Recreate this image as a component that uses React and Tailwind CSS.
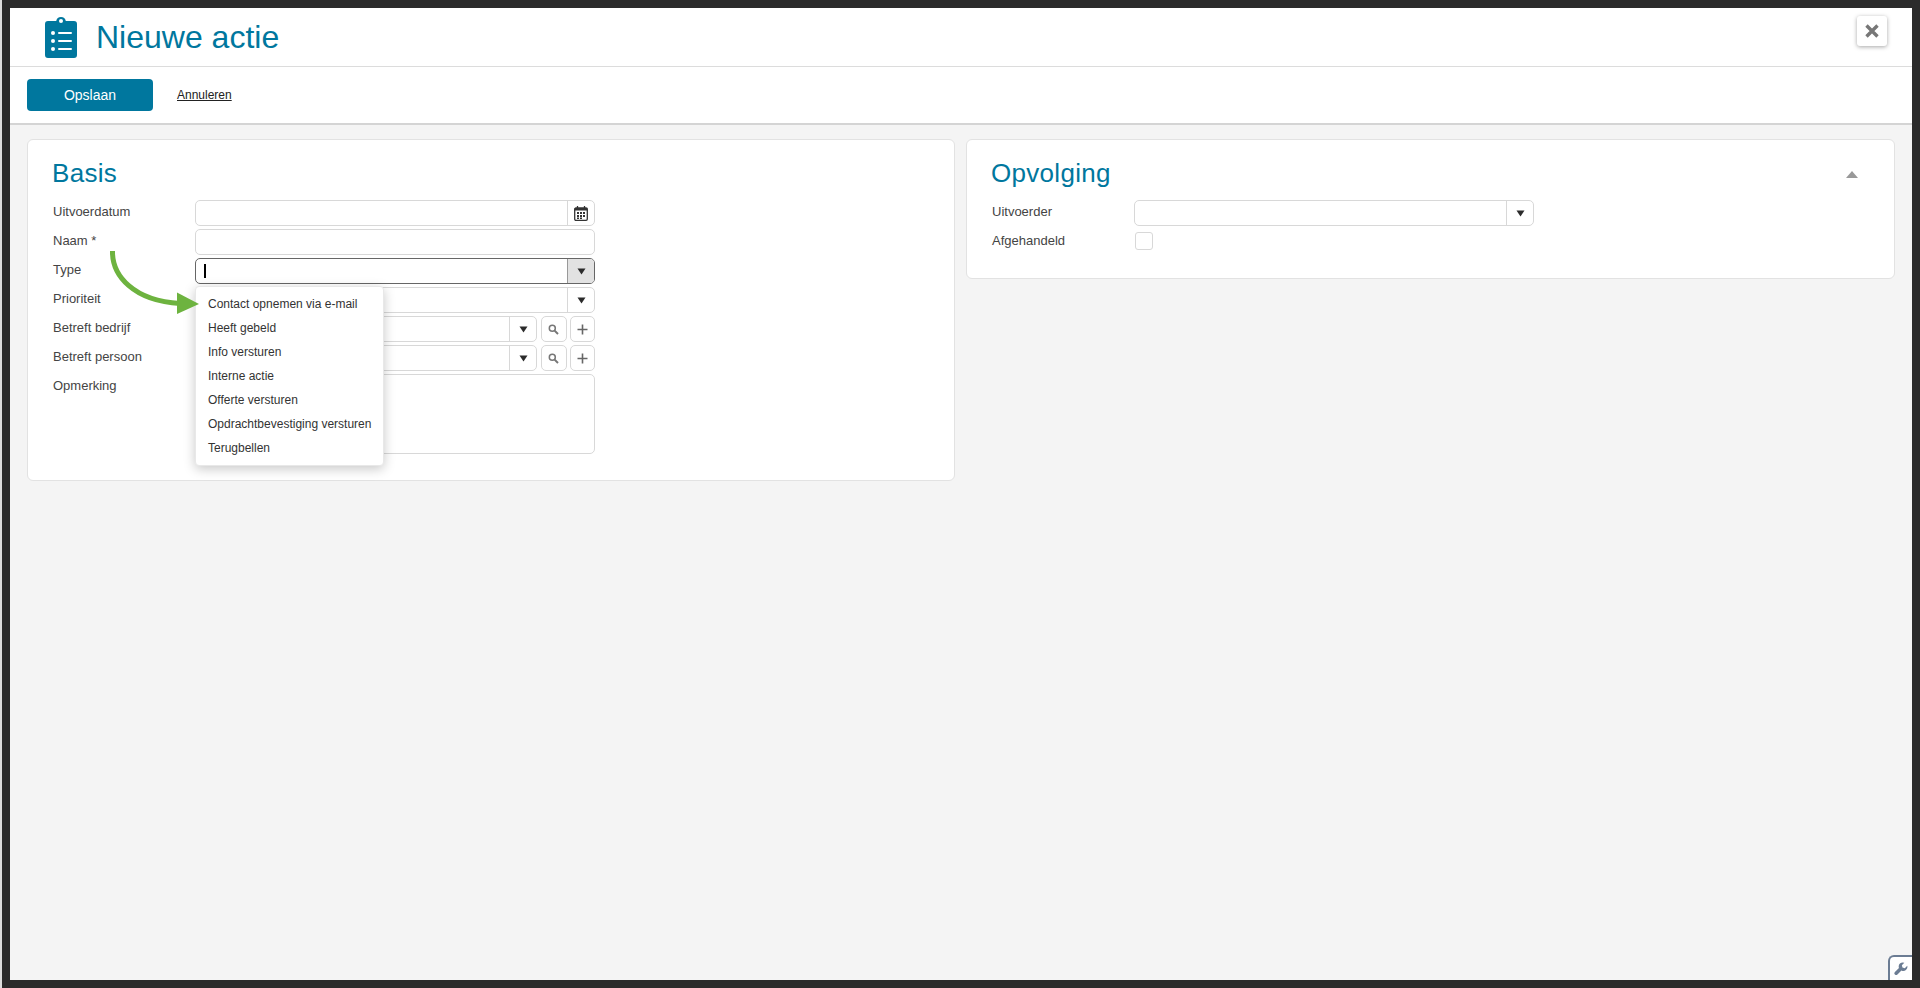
const typeOptions = [
    "Contact opnemen via e-mail",
    "Heeft gebeld",
    "Info versturen",
    "Interne actie",
    "Offerte versturen",
    "Opdrachtbevestiging versturen",
    "Terugbellen",
];

const Caret = () => (
    <svg width="9" height="7" viewBox="0 0 9 7">
        <path d="M0.5 0.5h8L4.5 6.5z" fill="#2b2b2b" />
    </svg>
);

const CalendarIcon = () => (
    <svg width="14" height="15" viewBox="0 0 14 15">
        <rect x="0.7" y="2" width="12.6" height="12.3" rx="1.2" fill="none" stroke="#333" strokeWidth="1.3" />
        <rect x="0.7" y="2" width="12.6" height="2.5" fill="#333" />
        <path d="M3.5 0v2M10.5 0v2" stroke="#333" strokeWidth="1.3" />
        <path d="M3 6h2v2H3zM6 6h2v2H6zM9 6h2v2H9zM3 9h2v2H3zM6 9h2v2H6zM9 9h2v2H9zM3 11.5h2v1.5H3zM6 11.5h2v1.5H6z" fill="#333" />
    </svg>
);

const SearchIcon = () => (
    <svg width="11" height="11" viewBox="0 0 11 11" fill="none">
        <circle cx="4.3" cy="4.3" r="3" stroke="#777" strokeWidth="1.5" />
        <path d="M6.6 6.6L10 10" stroke="#777" strokeWidth="2" />
    </svg>
);

const PlusIcon = () => (
    <svg width="11" height="11" viewBox="0 0 11 11">
        <path d="M5.5 0.5v10M0.5 5.5h10" stroke="#666" strokeWidth="1.6" />
    </svg>
);

const ClipboardIcon = () => (
    <svg width="32" height="43" viewBox="0 0 32 43">
        <path d="M3 6h8.2a4.9 4.9 0 0 1 9.6 0H29a3 3 0 0 1 3 3v31a3 3 0 0 1-3 3H3a3 3 0 0 1-3-3V9a3 3 0 0 1 3-3z" fill="#00779e" />
        <circle cx="16" cy="6" r="2" fill="#fff" />
        <circle cx="8" cy="18" r="2" fill="#fff" />
        <circle cx="8" cy="26" r="2" fill="#fff" />
        <circle cx="8" cy="34" r="2" fill="#fff" />
        <path d="M14 18h12M14 26h12M14 34h12" stroke="#fff" strokeWidth="2" strokeLinecap="round" />
    </svg>
);

const Label = ({ children }) => (
    <div className="w-[142px] shrink-0 -mt-px text-[13px] leading-[26px] text-[#444]">{children}</div>
);

const Field = ({ icon, children, width = "w-[400px]", focus = false }) => (
    <div className={`flex h-[26px] ${width} rounded-[5px] border overflow-hidden bg-white ${focus ? "border-[#666]" : "border-[#d8d8d8]"}`}>
        <div className="flex-1 flex items-center pl-[8px]">{children}</div>
        {icon && (
            <div className={`w-[27px] flex items-center justify-center border-l ${focus ? "border-[#999] bg-[#e2e2e2]" : "border-[#d8d8d8]"}`}>
                {icon}
            </div>
        )}
    </div>
);

const SquareButton = ({ children }) => (
    <div className="flex h-[26px] flex-1 items-center justify-center rounded-[5px] border border-[#d8d8d8] bg-white">
        {children}
    </div>
);

const Row = ({ label, children }) => (
    <div className="flex">
        <Label>{label}</Label>
        {children}
    </div>
);

const LookupRow = ({ label }) => (
    <Row label={label}>
        <div className="flex w-[400px] gap-[3px]">
            <div className="mr-px">
                <Field width="w-[342px]" icon={<Caret />} />
            </div>
            <SquareButton><SearchIcon /></SquareButton>
            <SquareButton><PlusIcon /></SquareButton>
        </div>
    </Row>
);

const App = () => {
    return (
        <div className="relative h-screen overflow-hidden bg-[#2b2b2b] pt-2 pb-2 pl-[10px] pr-2 font-['Liberation_Sans',Arial,sans-serif]">
            <div className="absolute left-0 top-0 h-full w-[2px] bg-[#dddddd]" />
            <div className="relative flex h-full flex-col bg-white">
                <header className="flex h-[59px] shrink-0 items-center justify-between border-b border-[#dcdcdc] pl-[35px] pr-[25px]">
                    <div className="flex items-center gap-[19px]">
                        <div className="h-[43px] -mt-px"><ClipboardIcon /></div>
                        <h1 className="text-[32px] leading-none text-[#00779e]">Nieuwe actie</h1>
                    </div>
                    <button className="flex h-[30px] w-[30px] -mt-[12px] items-center justify-center rounded-[3px] bg-white shadow-[0_1px_4px_rgba(0,0,0,0.35)]">
                        <svg width="14" height="14" viewBox="0 0 14 14">
                            <path d="M1.5 1.5l11 11M12.5 1.5l-11 11" stroke="#777" strokeWidth="3.4" />
                        </svg>
                    </button>
                </header>

                <div className="flex h-[58px] shrink-0 items-center gap-6 border-b-2 border-[#d4d4d4] pl-[17px]">
                    <button className="h-[32px] w-[126px] rounded-[4px] bg-[#00779e] text-[14px] font-medium text-white">Opslaan</button>
                    <a className="text-[12px] text-[#222] underline">Annuleren</a>
                </div>

                <main className="flex flex-1 items-start gap-[11px] bg-[#f4f4f4] pl-[17px] pr-[17px] pt-[14px]">
                    <section className="relative h-[342px] w-[928px] shrink-0 rounded-[6px] border border-[#e2e2e2] bg-white pl-[25px] pt-[18px]">
                        <h2 className="-ml-px mb-[11px] h-[31px] text-[26px] leading-[31px] tracking-[0.3px] text-[#00779e]">Basis</h2>
                        <div className="flex flex-col gap-[3px]">
                            <Row label="Uitvoerdatum"><Field icon={<CalendarIcon />} /></Row>
                            <Row label="Naam *"><Field /></Row>
                            <Row label="Type">
                                <Field focus icon={<Caret />}>
                                    <div className="h-[14px] w-[2px] bg-black" />
                                </Field>
                            </Row>
                            <Row label="Prioriteit"><Field icon={<Caret />} /></Row>
                            <LookupRow label="Betreft bedrijf" />
                            <LookupRow label="Betreft persoon" />
                            <Row label="Opmerking">
                                <div className="h-[80px] w-[400px] rounded-[5px] border border-[#d8d8d8] bg-white" />
                            </Row>
                        </div>

                        <div className="absolute left-[167px] top-[146px] z-10 w-[189px] rounded-[4px] border border-[#e8e8e8] bg-white py-[5px] shadow-[0_3px_12px_rgba(0,0,0,0.22)]">
                            {typeOptions.map((option) => (
                                <div key={option} className="h-[24px] pl-[12px] text-[12px] leading-[24px] text-[#333] whitespace-nowrap">
                                    {option}
                                </div>
                            ))}
                        </div>

                        {/* groene pijl naar de eerste optie */}
                        <svg className="absolute left-[80px] top-[108px] z-20" width="100" height="70" viewBox="0 0 100 70">
                            <path d="M4.5 3C4 28 26 53 72 55.5" fill="none" stroke="#6db33f" strokeWidth="5" />
                            <path d="M69 44.5L91 56 69 66z" fill="#6db33f" />
                        </svg>
                    </section>

                    <section className="relative h-[140px] w-[929px] shrink-0 rounded-[6px] border border-[#e2e2e2] bg-white pl-[25px] pt-[18px]">
                        <h2 className="-ml-px mb-[11px] h-[31px] text-[26px] leading-[31px] tracking-[0.3px] text-[#00779e]">Opvolging</h2>
                        <div className="flex flex-col gap-[3px]">
                            <Row label="Uitvoerder"><Field icon={<Caret />} /></Row>
                            <Row label="Afgehandeld">
                                <div className="ml-px h-[18px] w-[18px] translate-y-[3px] rounded-[3px] border border-[#d8d8d8] bg-white" />
                            </Row>
                        </div>
                        <svg className="absolute right-[36px] top-[31px]" width="12" height="7" viewBox="0 0 12 7">
                            <path d="M6 0l6 7H0z" fill="#999" />
                        </svg>
                    </section>
                </main>

                <div className="absolute bottom-0 right-0 flex h-[25px] w-[24px] items-center justify-center rounded-tl-[6px] border-l-2 border-t-2 border-[#6b7c93] bg-white">
                    <svg width="14" height="14" viewBox="0 0 24 24">
                        <path d="M22.7 6.3l-4.2 4.2-4-1-1-4 4.2-4.2a7 7 0 0 0-9.2 8.9L1.6 17.1a3 3 0 1 0 4.3 4.3l6.9-6.9a7 7 0 0 0 9.9-8.2z" fill="#6b7c93" />
                    </svg>
                </div>
            </div>
        </div>
    );
};

export default App;
